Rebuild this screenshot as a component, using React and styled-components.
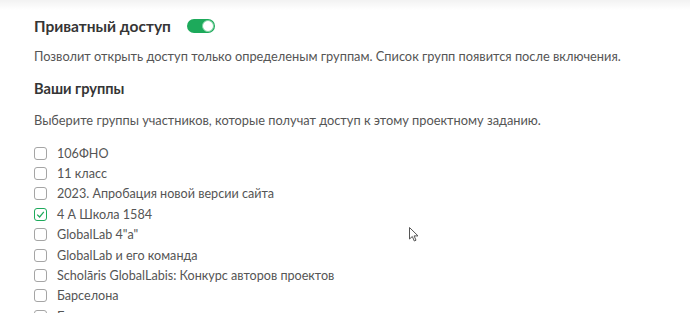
import React, { useState } from "react";
import styled, { createGlobalStyle } from "styled-components";

const Global = createGlobalStyle`
  html, body { margin: 0; padding: 0; background: #fff; }
  body { font-family: Lato, "Open Sans", sans-serif; color: #444; overflow: hidden; }
`;

const Page = styled.div`
  position: relative;
  width: 690px;
  height: 313px;
  overflow: hidden;
  background: #fff;
`;

const TopShade = styled.div`
  height: 10px;
  background: linear-gradient(to bottom, rgba(0,0,0,0.05), rgba(0,0,0,0));
`;

const Content = styled.div`
  padding: 3px 0 0 34px;
`;

const TitleRow = styled.div`
  display: flex;
  align-items: center;
  gap: 16px;
  height: 26px;
`;

const Title = styled.h2`
  margin: 0;
  font-size: 15.5px;
  font-weight: 700;
  color: #353535;
`;

const Toggle = styled.button`
  position: relative;
  width: 28px;
  height: 14px;
  padding: 0;
  border: none;
  border-radius: 7px;
  background: ${p => (p.$on ? "#1daa5b" : "#ccc")};
  cursor: pointer;
  &::after {
    content: "";
    position: absolute;
    top: 1px;
    left: ${p => (p.$on ? "15px" : "1px")};
    width: 10px;
    height: 10px;
    border-radius: 50%;
    background: #fff;
    border: 1px solid ${p => (p.$on ? "#7fd3a2" : "#bbb")};
  }
`;

const Desc = styled.p`
  margin: ${p => p.$mt || 0}px 0 0;
  font-size: 12.8px;
  line-height: 16px;
  color: #555;
`;

const SubTitle = styled.h3`
  margin: 15px 0 0;
  font-size: 14.6px;
  line-height: 20px;
  font-weight: 700;
  color: #353535;
`;

const List = styled.ul`
  list-style: none;
  margin: 15px 0 0;
  padding: 0;
  display: flex;
  flex-direction: column;
`;

const Item = styled.li`
  display: flex;
  align-items: center;
  gap: 10px;
  height: 20.4px;
  flex-shrink: 0;
  font-size: 12.6px;
  color: #555;
`;

const Box = styled.span`
  box-sizing: border-box;
  width: 13px;
  height: 13px;
  border-radius: 3px;
  border: 1px solid ${p => (p.$checked ? "#1daa5b" : "#a5a5a5")};
  display: inline-flex;
  align-items: center;
  justify-content: center;
  background: #fff;
`;

const Cursor = styled.svg`
  position: absolute;
  left: 409px;
  top: 227px;
`;

const groups = [
  ["106ФНО", false],
  ["11 класс", false],
  ["2023. Апробация новой версии сайта", false],
  ["4 А Школа 1584", true],
  ["GlobalLab 4\"а\"", false],
  ["GlobalLab и его команда", false],
  ["Scholāris GlobalLabis: Конкурс авторов проектов", false],
  ["Барселона", false],
  ["Берлин", false],
];

export default function App() {
  const [on, setOn] = useState(true);
  return (
    <Page>
      <Global />
      <TopShade />
      <Content>
        <TitleRow>
          <Title>Приватный доступ</Title>
          <Toggle $on={on} onClick={() => setOn(!on)} aria-label="toggle" />
        </TitleRow>
        <Desc $mt={9}>
          Позволит открыть доступ только определеным группам. Список групп появится после включения.
        </Desc>
        <SubTitle>Ваши группы</SubTitle>
        <Desc $mt={13}>
          Выберите группы участников, которые получат доступ к этому проектному заданию.
        </Desc>
        <List>
          {groups.map(([name, checked]) => (
            <Item key={name}>
              <Box $checked={checked}>
                {checked && (
                  <svg width="9" height="9" viewBox="0 0 9 9">
                    <path d="M1.2 4.6 L3.6 7 L7.8 1.8" fill="none" stroke="#1daa5b" strokeWidth="1.2" />
                  </svg>
                )}
              </Box>
              {name}
            </Item>
          ))}
        </List>
      </Content>
      <Cursor width="12" height="16" viewBox="0 0 12 16">
        <path d="M0.5 0.5 L0.5 12 L3.3 9.5 L5.3 14 L7 13.2 L5.1 8.9 L9 8.9 Z" fill="#fff" stroke="#555" strokeWidth="1" />
      </Cursor>
    </Page>
  );
}
